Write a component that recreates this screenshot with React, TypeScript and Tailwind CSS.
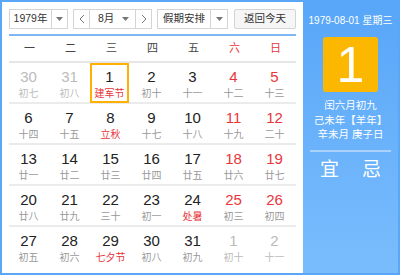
import React from 'react'

type Day = { n: number; l: string; other?: boolean; fest?: boolean; today?: boolean }

const rows: Day[][] = [
  [
    { n: 30, l: '初七', other: true },
    { n: 31, l: '初八', other: true },
    { n: 1, l: '建军节', fest: true, today: true },
    { n: 2, l: '初十' },
    { n: 3, l: '十一' },
    { n: 4, l: '十二' },
    { n: 5, l: '十三' },
  ],
  [
    { n: 6, l: '十四' },
    { n: 7, l: '十五' },
    { n: 8, l: '立秋', fest: true },
    { n: 9, l: '十七' },
    { n: 10, l: '十八' },
    { n: 11, l: '十九' },
    { n: 12, l: '二十' },
  ],
  [
    { n: 13, l: '廿一' },
    { n: 14, l: '廿二' },
    { n: 15, l: '廿三' },
    { n: 16, l: '廿四' },
    { n: 17, l: '廿五' },
    { n: 18, l: '廿六' },
    { n: 19, l: '廿七' },
  ],
  [
    { n: 20, l: '廿八' },
    { n: 21, l: '廿九' },
    { n: 22, l: '三十' },
    { n: 23, l: '初一' },
    { n: 24, l: '处暑', fest: true },
    { n: 25, l: '初三' },
    { n: 26, l: '初四' },
  ],
  [
    { n: 27, l: '初五' },
    { n: 28, l: '初六' },
    { n: 29, l: '七夕节', fest: true },
    { n: 30, l: '初八' },
    { n: 31, l: '初九' },
    { n: 1, l: '初十', other: true },
    { n: 2, l: '十一', other: true },
  ],
]

const weekdays = ['一', '二', '三', '四', '五', '六', '日']

const font = { fontFamily: '"Liberation Sans", "Noto Sans CJK SC", sans-serif' }

function Caret() {
  return (
    <svg width="7" height="4" viewBox="0 0 7 4">
      <path d="M0 0 L7 0 L3.5 4 Z" fill="#777" />
    </svg>
  )
}

function Chevron({ dir }: { dir: 'l' | 'r' }) {
  return (
    <svg width="6" height="10" viewBox="0 0 6 10">
      <path
        d={dir === 'l' ? 'M5 1 L1 5 L5 9' : 'M1 1 L5 5 L1 9'}
        stroke="#777"
        strokeWidth="1"
        fill="none"
      />
    </svg>
  )
}

function Cell({ d, col }: { d: Day; col: number }) {
  const weekend = col >= 5
  const numColor = d.other ? 'text-[#bbbbbb]' : weekend ? 'text-[#e8363a]' : 'text-[#222222]'
  const lunarColor = d.other ? 'text-[#bbbbbb]' : d.fest ? 'text-[#e8363a]' : 'text-[#999999]'
  return (
    <div className="h-[39px] flex justify-start">
      <div
        className={
          'w-[39px] h-[40px] flex flex-col items-center ' +
          (d.today ? 'border-2 border-[#ffb000] -ml-[1px] pt-[3px]' : 'pt-[5px]')
        }
      >
        <span className={'text-[15px] leading-[17px] ' + numColor}>{d.n}</span>
        <span className={'text-[10px] leading-[13px] mt-[2px] ' + lunarColor}>{d.l}</span>
      </div>
    </div>
  )
}

export default function App() {
  return (
    <div
      className="w-[400px] h-[275px] border-2 border-[#5aa6f7] flex overflow-hidden bg-white"
      style={font}
    >
      {/* Left: calendar */}
      <div className="w-[301px] shrink-0 bg-white px-[7px] pt-[7px]">
        {/* toolbar */}
        <div className="flex items-center h-[20px] text-[10.5px] text-[#333333]">
          <div className="w-[59px] h-[20px] border border-[#d4d4d4] flex">
            <div className="w-[42px] flex items-center justify-center border-r border-[#d4d4d4]">1979年</div>
            <div className="flex-1 flex items-center justify-center">
              <Caret />
            </div>
          </div>
          <div className="ml-[5px] w-[79px] h-[20px] border border-[#d4d4d4] flex">
            <div className="w-[16px] flex items-center justify-center border-r border-[#d4d4d4]">
              <Chevron dir="l" />
            </div>
            <div className="w-[46px] flex items-center border-r border-[#d4d4d4] pl-[8px]">
              <span>8月</span>
              <span className="ml-auto mr-[6px] flex">
                <Caret />
              </span>
            </div>
            <div className="flex-1 flex items-center justify-center">
              <Chevron dir="r" />
            </div>
          </div>
          <div className="ml-[5px] w-[71px] h-[20px] border border-[#d4d4d4] flex">
            <div className="w-[53px] flex items-center justify-center border-r border-[#d4d4d4]">假期安排</div>
            <div className="flex-1 flex items-center justify-center">
              <Caret />
            </div>
          </div>
          <div className="ml-[6px] w-[62px] h-[20px] border border-[#d4d4d4] bg-[#f6f6f6] flex items-center justify-center rounded-[2px]">
            返回今天
          </div>
        </div>

        <div className="mt-[5px] h-[2px] bg-[#7db8f5]" />

        {/* weekday header */}
        <div className="grid grid-cols-7 h-[25px] items-center text-[11px]">
          {weekdays.map((w, i) => (
            <div key={w} className={'text-center ' + (i >= 5 ? 'text-[#e8363a]' : 'text-[#444444]')}>
              {w}
            </div>
          ))}
        </div>
        <div className="h-[2px] bg-[#e6e6e6]" />

        {rows.map((r, ri) => (
          <div key={ri}>
            <div className="grid grid-cols-7">
              {r.map((d, ci) => (
                <Cell key={ci} d={d} col={ci} />
              ))}
            </div>
            {ri < rows.length - 1 && <div className="h-[2px] bg-[#ebebeb]" />}
          </div>
        ))}
      </div>

      {/* Right: day detail */}
      <div className="flex-1 bg-gradient-to-b from-[#58a6f8] to-[#7abdfd] flex flex-col items-center text-white">
        <div className="mt-[12px] text-[10px] leading-[14px] whitespace-nowrap">1979-08-01 星期三</div>
        <div className="mt-[9px] w-[55px] h-[55px] rounded-[3px] bg-[#fcb800] flex items-center justify-center">
          <span className="text-[50px] leading-none">1</span>
        </div>
        <div className="mt-[6px] text-[10.5px] leading-[14.5px] text-center whitespace-nowrap">
          <div>闰六月初九</div>
          <div>己未年【羊年】</div>
          <div>辛未月 庚子日</div>
        </div>
        <div className="mt-[8px] w-[81px] h-[2px] bg-[#a9d3fd]" />
        <div className="mt-[6px] w-[81px] flex justify-between px-[10px] text-[19px] leading-[24px]">
          <span>宜</span>
          <span>忌</span>
        </div>
      </div>
    </div>
  )
}
